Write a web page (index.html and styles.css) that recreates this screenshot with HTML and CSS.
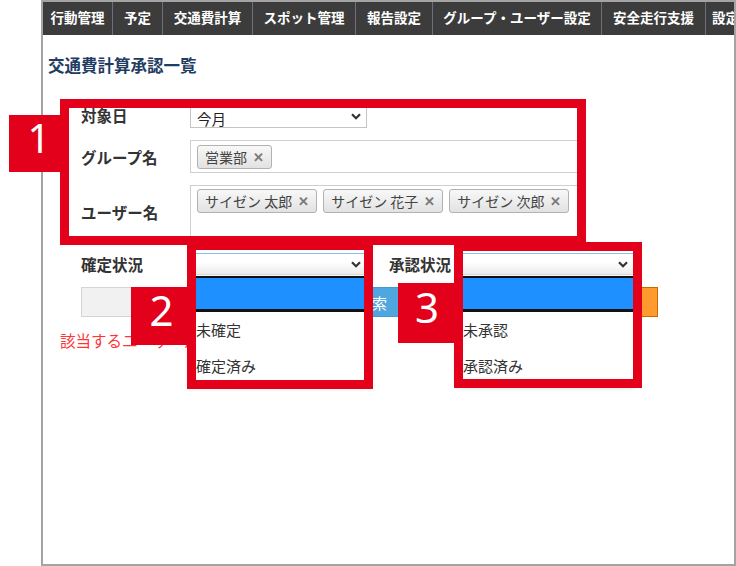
FILE: index.html
```html
<!DOCTYPE html>
<html lang="ja">
<head>
<meta charset="utf-8">
<title>交通費計算承認一覧</title>
<link rel="stylesheet" href="styles.css">
</head>
<body>
<div class="stage">
  <div class="frame">
    <nav class="nav">
      <div class="nav-item w70">行動管理</div>
      <div class="nav-item w50">予定</div>
      <div class="nav-item w90">交通費計算</div>
      <div class="nav-item w103">スポット管理</div>
      <div class="nav-item w77">報告設定</div>
      <div class="nav-item w169">グループ・ユーザー設定</div>
      <div class="nav-item w104">安全走行支援</div>
      <div class="nav-item w60">設定</div>
    </nav>
    <h1 class="title">交通費計算承認一覧</h1>
    <div class="form">
      <div class="row row1">
        <div class="label">対象日</div>
        <div class="select plain">
          <span>今月</span>
          <svg class="chev" width="10" height="7" viewBox="0 0 10 7"><path d="M1 1.2 L5 5.2 L9 1.2" fill="none" stroke="#333" stroke-width="2.2"/></svg>
        </div>
      </div>
      <div class="row row2">
        <div class="label">グループ名</div>
        <div class="tagbox">
          <span class="tag">営業部<b class="x">✕</b></span>
        </div>
      </div>
      <div class="row row3">
        <div class="label">ユーザー名</div>
        <div class="tagbox tall">
          <span class="tag">サイゼン 太郎<b class="x">✕</b></span>
          <span class="tag">サイゼン 花子<b class="x">✕</b></span>
          <span class="tag">サイゼン 次郎<b class="x">✕</b></span>
        </div>
      </div>
      <div class="row row4">
        <div class="label">確定状況</div>
        <div class="select focus">
          <span></span>
          <svg class="chev" width="10" height="7" viewBox="0 0 10 7"><path d="M1 1.2 L5 5.2 L9 1.2" fill="none" stroke="#333" stroke-width="2.2"/></svg>
          <ul class="dropdown">
            <li class="opt active"></li>
            <li class="opt">未確定</li>
            <li class="opt">確定済み</li>
          </ul>
        </div>
        <div class="label label2">承認状況</div>
        <div class="select focus">
          <span></span>
          <svg class="chev" width="10" height="7" viewBox="0 0 10 7"><path d="M1 1.2 L5 5.2 L9 1.2" fill="none" stroke="#333" stroke-width="2.2"/></svg>
          <ul class="dropdown">
            <li class="opt active"></li>
            <li class="opt">未承認</li>
            <li class="opt">承認済み</li>
          </ul>
        </div>
      </div>
      <div class="row row5">
        <button class="btn gray">クリア</button>
        <button class="btn blue">検索</button>
        <button class="btn orange">CSV出力</button>
      </div>
      <p class="message">該当するユーザーが存在しません</p>
    </div>
  </div>

  <div class="box box1"></div>
  <div class="badge badge1">1</div>
  <div class="box box2"></div>
  <div class="badge badge2">2</div>
  <div class="box box3"></div>
  <div class="badge badge3">3</div>
</div>
</body>
</html>
```

FILE: styles.css
```css
* { box-sizing: border-box; }
html, body { margin: 0; padding: 0; background: #fff; }
body {
  font-family: "Noto Sans CJK JP", "Noto Sans", sans-serif;
  color: #333;
}
.stage {
  position: relative;
  width: 736px;
  height: 566px;
  overflow: hidden;
}
.frame {
  margin-left: 41px;
  width: 695px;
  height: 566px;
  border: 2px solid #a4a4a4;
  background: #fff;
  overflow: hidden;
}
.nav {
  display: flex;
  height: 33px;
  background: #3c3c3c;
  overflow: hidden;
}
.nav-item {
  flex: none;
  height: 33px;
  line-height: 31px;
  text-align: center;
  color: #fff;
  font-weight: 700;
  font-size: 13.5px;
  border-right: 1px solid #6e6e7a;
  white-space: nowrap;
  overflow: hidden;
}
.w70 { width: 70px; }
.w50 { width: 50px; }
.w90 { width: 90px; }
.w103 { width: 103px; }
.w77 { width: 77px; }
.w169 { width: 169px; }
.w104 { width: 104px; }
.w60 { width: 60px; text-align: left; padding-left: 6px; }

.title {
  margin: 20px 0 0 5px;
  font-size: 16.5px;
  line-height: 20px;
  font-weight: 700;
  color: #1f3c62;
}

.form {
  margin: 29px 0 0 17px;
}
.row {
  display: flex;
  align-items: center;
}
.label {
  flex: none;
  width: 130px;
  padding-left: 21px;
  font-size: 15.5px;
  line-height: 20px;
  font-weight: 700;
  color: #333;
}
.row1 { height: 24px; }
.row1 .label { margin-top: -3px; }
.row2 { height: 33px; margin-top: 12px; }
.row3 { height: 53px; margin-top: 12px; }
.row4 { height: 22px; margin-top: 15px; }
.row5 { height: 30px; margin-top: 12px; padding-left: 21px; gap: 11px; }

.select {
  position: relative;
  flex: none;
  width: 177px;
  height: 24px;
  display: flex;
  align-items: center;
  justify-content: space-between;
  padding: 0 5px 0 6px;
  border: 1px solid #c4c4c4;
  background: #fff;
  font-size: 14.5px;
  line-height: 20px;
  color: #222;
}
.select.plain span { padding-top: 5px; }
.select.focus {
  height: 22px;
  border-color: #dcdcdc;
  border-top-color: #86c2ea;
  background: linear-gradient(#ffffff 40%, #ececec);
}
.chev { display: block; }
.label2 {
  width: 68px;
  margin-left: 22px;
  padding-left: 0;
}

.tagbox {
  flex: none;
  width: 395px;
  height: 33px;
  border: 1px solid #cfcfcf;
  padding: 4px 6px;
  display: flex;
  align-items: flex-start;
  gap: 6px;
}
.tagbox.tall { height: 53px; padding-top: 3px; }
.tag {
  display: inline-flex;
  align-items: center;
  height: 24px;
  padding: 0 7px 0 7px;
  border: 1px solid #b2b2b2;
  border-radius: 3px;
  background: linear-gradient(#f8f8f8, #e2e2e2);
  font-size: 14px;
  line-height: 20px;
  color: #444;
  white-space: nowrap;
}
.x {
  margin-left: 6px;
  font-size: 13px;
  font-weight: 700;
  color: #7a7a7a;
}

.dropdown {
  position: absolute;
  left: -1px;
  top: 22px;
  width: 177px;
  margin: 0;
  padding: 0;
  list-style: none;
  background: #fff;
  box-shadow: 0 3px 6px rgba(0,0,0,0.18);
}
.opt {
  height: 36px;
  line-height: 36px;
  padding-left: 6px;
  font-size: 15px;
  color: #333;
}
.opt.active {
  background: #1e90ff;
  border-top: 2px solid #111;
  border-bottom: 3px solid #111;
  border-right: 1px solid #111;
  border-left: 1px solid #111;
}

.btn {
  flex: none;
  height: 30px;
  border: 1px solid #d4d4d4;
  font-family: inherit;
  font-size: 15px;
  padding: 0;
  text-align: center;
}
.btn.gray { width: 200px; background: #f1f1f1; color: #333; }
.btn.blue { width: 160px; background: #50a7e0; border-color: #4399d2; color: #fff; }
.btn.orange { width: 195px; background: #ff9a2e; border-color: #c96a00; color: #fff; }

.message {
  margin: 13px 0 0 0;
  font-size: 15.5px;
  line-height: 20px;
  color: #ff3535;
}

.box {
  position: absolute;
  border: 9px solid #e3001b;
}
.box1 { left: 60px; top: 99px; width: 526px; height: 146px; }
.box2 { left: 187px; top: 241px; width: 186px; height: 148px; }
.box3 { left: 454px; top: 242px; width: 188px; height: 146px; }

.badge {
  position: absolute;
  display: flex;
  align-items: center;
  justify-content: center;
  padding-bottom: 12px;
  background: #e3001b;
  color: #fff;
  font-family: "Noto Sans", "DejaVu Sans", sans-serif;
  font-size: 42px;
  line-height: 42px;
  font-weight: 400;
}
.badge1 { left: 9px; top: 115px; width: 60px; height: 57px; font-size: 40px; }
.badge2 { left: 131px; top: 287px; width: 61px; height: 58px; }
.badge3 { left: 398px; top: 283px; width: 58px; height: 60px; }
```
